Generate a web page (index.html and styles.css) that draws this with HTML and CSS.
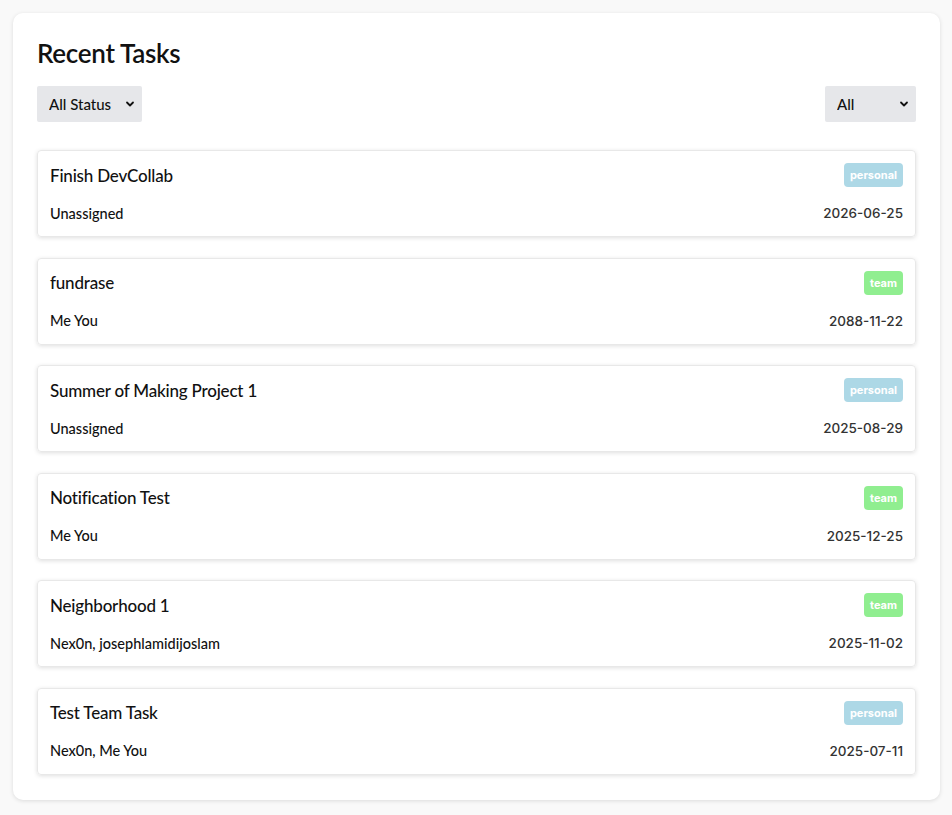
FILE: index.html
```html
<!DOCTYPE html>
<html lang="en">
<head>
<meta charset="utf-8">
<title>Recent Tasks</title>
<link rel="stylesheet" href="styles.css">
</head>
<body>
<main class="panel">
  <h2 class="panel-title">Recent Tasks</h2>
  <div class="filters">
    <div class="select-wrap status">
      <select class="select"><option>All Status</option></select>
      <svg class="chev" viewBox="0 0 10 10" width="10" height="10"><path d="M2 3.5 L5 6.5 L8 3.5" fill="none" stroke="#111" stroke-width="1.8" stroke-linecap="round" stroke-linejoin="round"/></svg>
    </div>
    <div class="select-wrap type">
      <select class="select"><option>All</option></select>
      <svg class="chev" viewBox="0 0 10 10" width="10" height="10"><path d="M2 3.5 L5 6.5 L8 3.5" fill="none" stroke="#111" stroke-width="1.8" stroke-linecap="round" stroke-linejoin="round"/></svg>
    </div>
  </div>
  <ul class="tasks">
    <li class="task">
      <div class="row"><span class="task-title">Finish DevCollab</span><span class="badge personal">personal</span></div>
      <div class="row"><span class="assignees">Unassigned</span><span class="date">2026-06-25</span></div>
    </li>
    <li class="task">
      <div class="row"><span class="task-title">fundrase</span><span class="badge team">team</span></div>
      <div class="row"><span class="assignees">Me You</span><span class="date">2088-11-22</span></div>
    </li>
    <li class="task">
      <div class="row"><span class="task-title">Summer of Making Project 1</span><span class="badge personal">personal</span></div>
      <div class="row"><span class="assignees">Unassigned</span><span class="date">2025-08-29</span></div>
    </li>
    <li class="task">
      <div class="row"><span class="task-title">Notification Test</span><span class="badge team">team</span></div>
      <div class="row"><span class="assignees">Me You</span><span class="date">2025-12-25</span></div>
    </li>
    <li class="task">
      <div class="row"><span class="task-title">Neighborhood 1</span><span class="badge team">team</span></div>
      <div class="row"><span class="assignees">Nex0n, josephlamidijoslam</span><span class="date">2025-11-02</span></div>
    </li>
    <li class="task">
      <div class="row"><span class="task-title">Test Team Task</span><span class="badge personal">personal</span></div>
      <div class="row"><span class="assignees">Nex0n, Me You</span><span class="date">2025-07-11</span></div>
    </li>
  </ul>
</main>
</body>
</html>
```
FILE: styles.css
```css
* { box-sizing: border-box; }
html, body { margin: 0; }
body {
  background: #f9f9f9;
  padding: 13px 12px 13px 13px;
  font-family: "Lato", "Noto Sans", sans-serif;
  color: #111;
}
.panel {
  background: #fff;
  border-radius: 10px;
  box-shadow: 0 1px 4px rgba(0,0,0,0.12);
  padding: 24px 24px 25px 24px;
}
.panel-title {
  margin: 0 0 17px 0;
  font-size: 26px;
  line-height: 32px;
  font-weight: 600;
  letter-spacing: -0.3px;
}
.filters {
  display: flex;
  justify-content: space-between;
  margin-bottom: 28px;
}
.select-wrap { position: relative; }
.select {
  appearance: none;
  -webkit-appearance: none;
  border: none;
  border-radius: 2px;
  background: #e6e7ea;
  height: 36px;
  padding: 0 12px;
  font-family: inherit;
  font-size: 15px;
  font-weight: 500;
  color: #111;
}
.status .select { width: 105px; }
.type .select { width: 91px; }
.chev { position: absolute; top: 13px; right: 7px; pointer-events: none; }
.tasks {
  list-style: none;
  margin: 0;
  padding: 0;
  display: flex;
  flex-direction: column;
  gap: 20.6px;
}
.task {
  border: 1px solid #e8e8e8;
  border-radius: 4px;
  box-shadow: 0 1px 4px rgba(0,0,0,0.13);
  padding: 12px 12px 13px 12px;
  display: flex;
  flex-direction: column;
  gap: 16px;
}
.row {
  display: flex;
  justify-content: space-between;
  align-items: center;
}
.row:first-child { height: 24px; }
.row:last-child { height: 20px; }
.task-title { font-size: 17px; font-weight: 500; letter-spacing: -0.2px; }
.assignees { font-size: 14.5px; font-weight: 500; }
.date { font-family: "Inter", sans-serif; font-size: 13.5px; font-weight: 500; color: #333; }
.badge {
  height: 24px;
  line-height: 24px;
  padding: 0 6px;
  border-radius: 4px;
  color: #fff;
  font-family: "Inter", sans-serif;
  font-size: 11px;
  font-weight: 700;
}
.badge.personal { background: #add8e6; }
.badge.team { background: #90ee90; }
```
